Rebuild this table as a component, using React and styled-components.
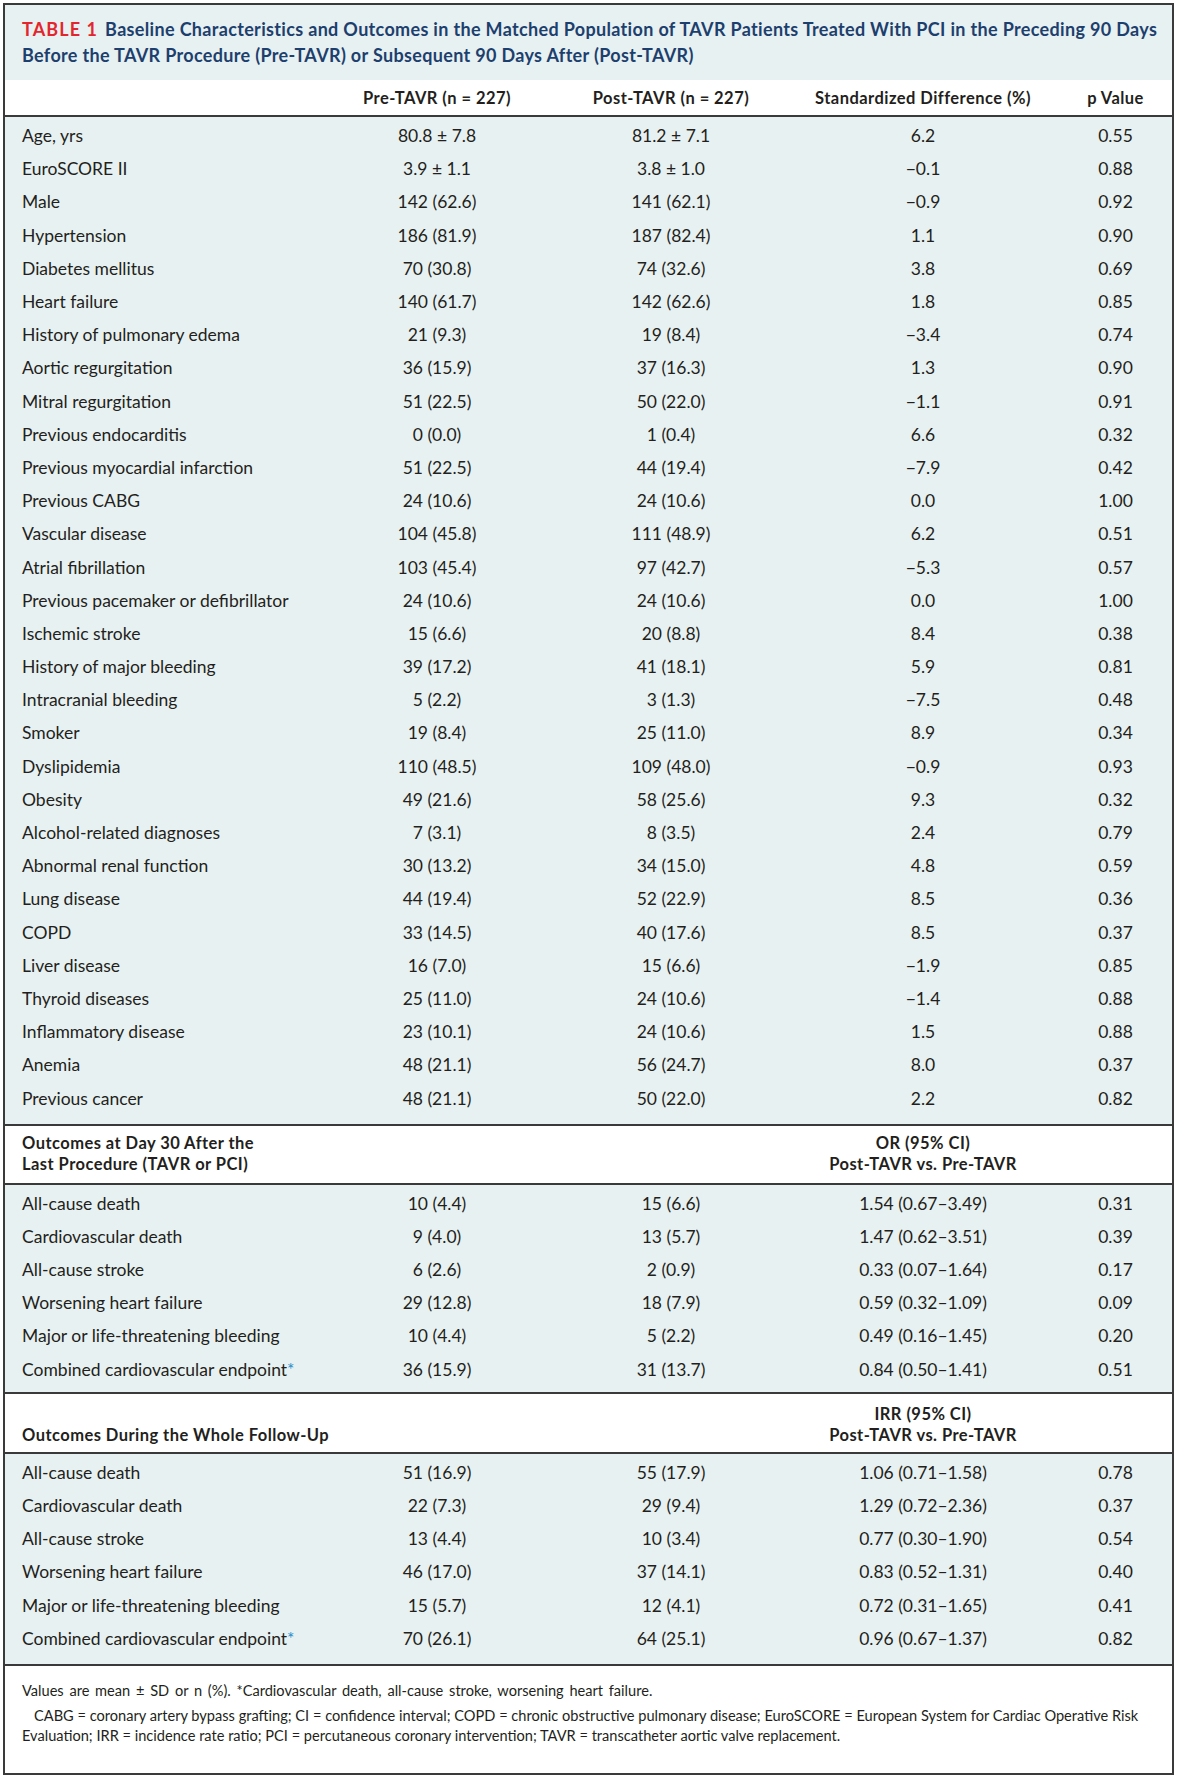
import React from "react";
import styled, { createGlobalStyle } from "styled-components";

const GlobalStyle = createGlobalStyle`
  body {
    margin: 0;
    background: #ffffff;
    font-family: Lato, "Open Sans", sans-serif;
    color: #231f20;
  }
`;

const TINT = "#e8f1f1";
const LINE = "#3a3a3a";
const COLS = "326px 212px 256px 248px 1fr";

const Frame = styled.div`
  width: 1167px;
  margin: 3px 0 0 3px;
  border: 2px solid ${LINE};
  background: #ffffff;
`;

const TitleBlock = styled.div`
  background: ${TINT};
  padding: 11px 10px 12px 17px;
  font-weight: 700;
  font-size: 18px;
  letter-spacing: 0.33px;
  line-height: 26px;
  color: #1d3f6e;
  white-space: nowrap;
`;

const Label = styled.span`
  color: #e3262e;
  letter-spacing: 1.1px;
  margin-right: 7px;
`;

const HeadRow = styled.div`
  display: grid;
  grid-template-columns: ${COLS};
  height: 35px;
  align-items: center;
  border-bottom: 2px solid ${LINE};
  font-weight: 700;
  font-size: 16.5px;
  letter-spacing: 0.45px;
`;

const Cell = styled.div`
  text-align: ${(p) => (p.$left ? "left" : "center")};
  padding-left: ${(p) => (p.$left ? "17px" : p.$last ? "12px" : "0")};
  white-space: nowrap;
`;

const Body = styled.div`
  background: ${TINT};
  padding: ${(p) => p.$pad || "2px 0 9px"};
  border-bottom: 2px solid ${LINE};
`;

const Row = styled.div`
  display: grid;
  grid-template-columns: ${COLS};
  height: 33.2px;
  align-items: center;
  font-size: 17.5px;
`;

const Star = styled.span`
  color: #1f8fcb;
`;

const SectionHead = styled.div`
  display: grid;
  grid-template-columns: ${COLS};
  align-items: end;
  height: ${(p) => p.$h};
  padding-bottom: ${(p) => p.$pb || "8px"};
  box-sizing: border-box;
  border-bottom: 2px solid ${LINE};
  font-weight: 700;
  font-size: 16.5px;
  letter-spacing: 0.45px;
  line-height: 21px;
`;

const Footer = styled.div`
  padding: 15px 8px 22px 17px;
  font-size: 14.6px;
  line-height: 20px;
`;

const Note = styled.p`
  margin: 0 0 5px;
  text-indent: ${(p) => (p.$indent ? "12px" : "0")};
  word-spacing: ${(p) => (p.$indent ? "0" : "2px")};
`;

const baseline = [
  ["Age, yrs", "80.8 ± 7.8", "81.2 ± 7.1", "6.2", "0.55"],
  ["EuroSCORE II", "3.9 ± 1.1", "3.8 ± 1.0", "−0.1", "0.88"],
  ["Male", "142 (62.6)", "141 (62.1)", "−0.9", "0.92"],
  ["Hypertension", "186 (81.9)", "187 (82.4)", "1.1", "0.90"],
  ["Diabetes mellitus", "70 (30.8)", "74 (32.6)", "3.8", "0.69"],
  ["Heart failure", "140 (61.7)", "142 (62.6)", "1.8", "0.85"],
  ["History of pulmonary edema", "21 (9.3)", "19 (8.4)", "−3.4", "0.74"],
  ["Aortic regurgitation", "36 (15.9)", "37 (16.3)", "1.3", "0.90"],
  ["Mitral regurgitation", "51 (22.5)", "50 (22.0)", "−1.1", "0.91"],
  ["Previous endocarditis", "0 (0.0)", "1 (0.4)", "6.6", "0.32"],
  ["Previous myocardial infarction", "51 (22.5)", "44 (19.4)", "−7.9", "0.42"],
  ["Previous CABG", "24 (10.6)", "24 (10.6)", "0.0", "1.00"],
  ["Vascular disease", "104 (45.8)", "111 (48.9)", "6.2", "0.51"],
  ["Atrial fibrillation", "103 (45.4)", "97 (42.7)", "−5.3", "0.57"],
  ["Previous pacemaker or defibrillator", "24 (10.6)", "24 (10.6)", "0.0", "1.00"],
  ["Ischemic stroke", "15 (6.6)", "20 (8.8)", "8.4", "0.38"],
  ["History of major bleeding", "39 (17.2)", "41 (18.1)", "5.9", "0.81"],
  ["Intracranial bleeding", "5 (2.2)", "3 (1.3)", "−7.5", "0.48"],
  ["Smoker", "19 (8.4)", "25 (11.0)", "8.9", "0.34"],
  ["Dyslipidemia", "110 (48.5)", "109 (48.0)", "−0.9", "0.93"],
  ["Obesity", "49 (21.6)", "58 (25.6)", "9.3", "0.32"],
  ["Alcohol-related diagnoses", "7 (3.1)", "8 (3.5)", "2.4", "0.79"],
  ["Abnormal renal function", "30 (13.2)", "34 (15.0)", "4.8", "0.59"],
  ["Lung disease", "44 (19.4)", "52 (22.9)", "8.5", "0.36"],
  ["COPD", "33 (14.5)", "40 (17.6)", "8.5", "0.37"],
  ["Liver disease", "16 (7.0)", "15 (6.6)", "−1.9", "0.85"],
  ["Thyroid diseases", "25 (11.0)", "24 (10.6)", "−1.4", "0.88"],
  ["Inflammatory disease", "23 (10.1)", "24 (10.6)", "1.5", "0.88"],
  ["Anemia", "48 (21.1)", "56 (24.7)", "8.0", "0.37"],
  ["Previous cancer", "48 (21.1)", "50 (22.0)", "2.2", "0.82"],
];

const day30 = [
  ["All-cause death", "10 (4.4)", "15 (6.6)", "1.54 (0.67–3.49)", "0.31"],
  ["Cardiovascular death", "9 (4.0)", "13 (5.7)", "1.47 (0.62–3.51)", "0.39"],
  ["All-cause stroke", "6 (2.6)", "2 (0.9)", "0.33 (0.07–1.64)", "0.17"],
  ["Worsening heart failure", "29 (12.8)", "18 (7.9)", "0.59 (0.32–1.09)", "0.09"],
  ["Major or life-threatening bleeding", "10 (4.4)", "5 (2.2)", "0.49 (0.16–1.45)", "0.20"],
  ["Combined cardiovascular endpoint*", "36 (15.9)", "31 (13.7)", "0.84 (0.50–1.41)", "0.51"],
];

const followUp = [
  ["All-cause death", "51 (16.9)", "55 (17.9)", "1.06 (0.71–1.58)", "0.78"],
  ["Cardiovascular death", "22 (7.3)", "29 (9.4)", "1.29 (0.72–2.36)", "0.37"],
  ["All-cause stroke", "13 (4.4)", "10 (3.4)", "0.77 (0.30–1.90)", "0.54"],
  ["Worsening heart failure", "46 (17.0)", "37 (14.1)", "0.83 (0.52–1.31)", "0.40"],
  ["Major or life-threatening bleeding", "15 (5.7)", "12 (4.1)", "0.72 (0.31–1.65)", "0.41"],
  ["Combined cardiovascular endpoint*", "70 (26.1)", "64 (25.1)", "0.96 (0.67–1.37)", "0.82"],
];

function renderLabel(text) {
  if (text.endsWith("*")) {
    return (
      <>
        {text.slice(0, -1)}
        <Star>*</Star>
      </>
    );
  }
  return text;
}

function DataRows({ rows }) {
  return rows.map((r) => (
    <Row key={r[0]}>
      <Cell $left>{renderLabel(r[0])}</Cell>
      <Cell>{r[1]}</Cell>
      <Cell>{r[2]}</Cell>
      <Cell>{r[3]}</Cell>
      <Cell $last>{r[4]}</Cell>
    </Row>
  ));
}

export default function App() {
  return (
    <>
      <GlobalStyle />
      <Frame>
        <TitleBlock>
          <Label>TABLE 1</Label>
          Baseline Characteristics and Outcomes in the Matched Population of TAVR Patients Treated With PCI in the Preceding 90 Days
          <br />
          Before the TAVR Procedure (Pre-TAVR) or Subsequent 90 Days After (Post-TAVR)
        </TitleBlock>

        <HeadRow>
          <Cell $left />
          <Cell>Pre-TAVR (n = 227)</Cell>
          <Cell>Post-TAVR (n = 227)</Cell>
          <Cell>Standardized Difference (%)</Cell>
          <Cell $last>p Value</Cell>
        </HeadRow>

        <Body>
          <DataRows rows={baseline} />
        </Body>

        <SectionHead $h="59px">
          <Cell $left>
            Outcomes at Day 30 After the
            <br />
            Last Procedure (TAVR or PCI)
          </Cell>
          <Cell />
          <Cell />
          <Cell>
            OR (95% CI)
            <br />
            Post-TAVR vs. Pre-TAVR
          </Cell>
          <Cell $last />
        </SectionHead>

        <Body $pad="2px 0 6px">
          <DataRows rows={day30} />
        </Body>

        <SectionHead $h="60px" $pb="6px">
          <Cell $left>Outcomes During the Whole Follow-Up</Cell>
          <Cell />
          <Cell />
          <Cell>
            IRR (95% CI)
            <br />
            Post-TAVR vs. Pre-TAVR
          </Cell>
          <Cell $last />
        </SectionHead>

        <Body $pad="2px 0 9px">
          <DataRows rows={followUp} />
        </Body>

        <Footer>
          <Note>
            Values are mean ± SD or n (%). *Cardiovascular death, all-cause stroke, worsening heart failure.
          </Note>
          <Note $indent>
            CABG = coronary artery bypass grafting; CI = confidence interval; COPD = chronic obstructive pulmonary disease; EuroSCORE = European System for Cardiac Operative Risk Evaluation; IRR = incidence rate ratio; PCI = percutaneous coronary intervention; TAVR = transcatheter aortic valve replacement.
          </Note>
        </Footer>
      </Frame>
    </>
  );
}
